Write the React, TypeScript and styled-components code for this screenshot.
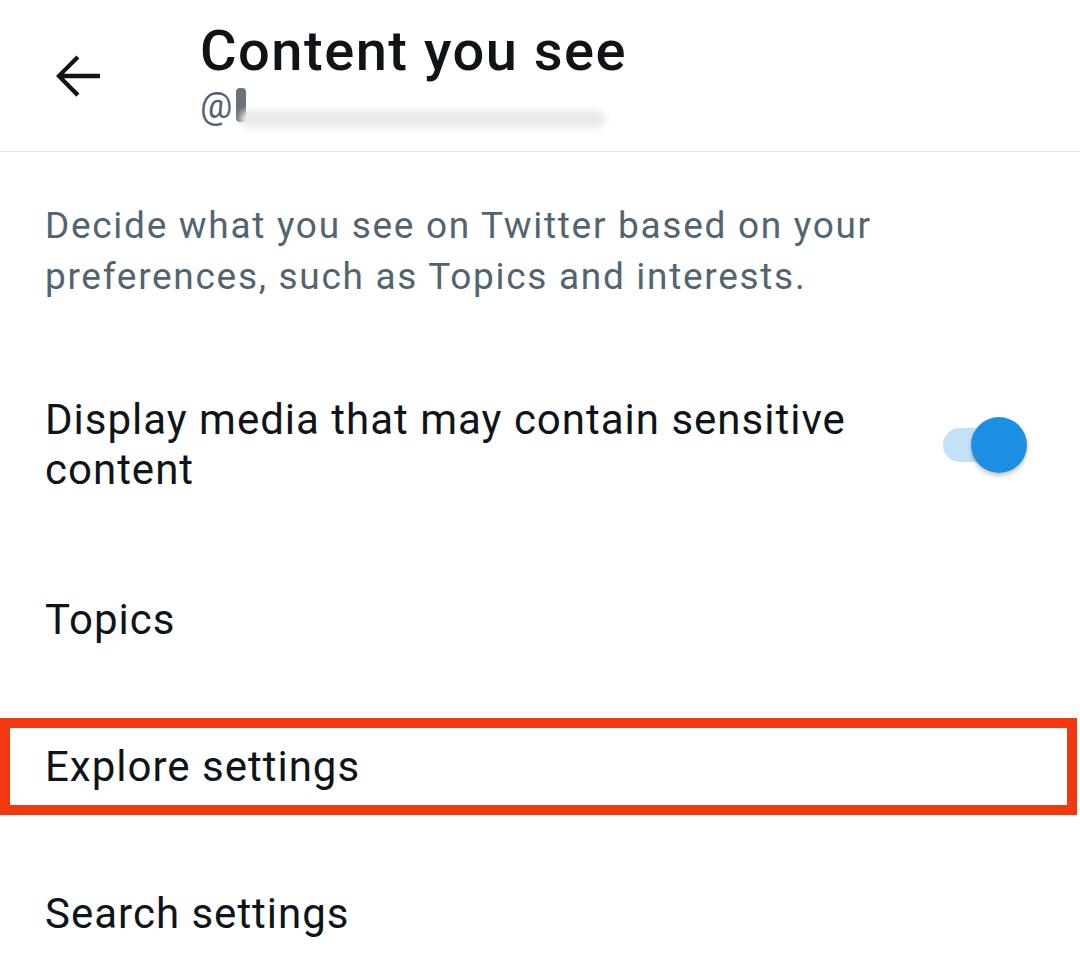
import * as React from 'react';
import styled, { createGlobalStyle } from 'styled-components';

const GlobalStyle = createGlobalStyle`
  html, body {
    margin: 0;
    padding: 0;
    background: #ffffff;
  }
  body {
    font-family: Roboto, "Noto Sans", sans-serif;
    color: #0f1419;
  }
`;

const Page = styled.div`
  width: 1080px;
  min-height: 976px;
  background: #ffffff;
  overflow: hidden;
`;

const Header = styled.header`
  display: flex;
  align-items: flex-start;
  height: 151px;
  border-bottom: 1px solid #e3e7ea;
`;

const BackButton = styled.button`
  display: flex;
  align-items: center;
  justify-content: center;
  width: 66px;
  height: 66px;
  margin: 43px 89px 0 45px;
  padding: 0;
  border: none;
  background: none;
  color: #0f1419;
`;

const TitleBlock = styled.div`
  display: flex;
  flex-direction: column;
  padding-top: 18px;
`;

const Title = styled.h1`
  margin: 0;
  font-size: 56px;
  font-weight: 500;
  letter-spacing: 1.5px;
  line-height: 66px;
  color: #0f1419;
`;

const Handle = styled.div`
  display: flex;
  align-items: center;
  height: 44px;
  font-size: 36px;
  color: #536471;
`;

const Redacted = styled.span`
  position: relative;
  display: inline-block;
  width: 370px;
  height: 40px;
  margin-left: 4px;

  &::before {
    content: '';
    position: absolute;
    left: 0;
    top: 2px;
    width: 10px;
    height: 34px;
    border-radius: 4px;
    background: #6b7379;
  }
  &::after {
    content: '';
    position: absolute;
    left: 4px;
    top: 24px;
    width: 366px;
    height: 18px;
    border-radius: 9px;
    background: #e9ebeb;
    filter: blur(3px);
  }
`;

const Description = styled.p`
  margin: 0;
  padding: 48px 45px 0;
  font-size: 37px;
  letter-spacing: 1.7px;
  line-height: 51px;
  color: #536471;
`;

const List = styled.div`
  display: flex;
  flex-direction: column;
  gap: 50px;
`;

const ToggleRow = styled.div`
  display: flex;
  align-items: center;
  justify-content: space-between;
  gap: 60px;
  padding: 93px 55px 26px 45px;
`;

const ItemText = styled.span`
  font-size: 42px;
  letter-spacing: 1px;
  line-height: 50px;
  color: #0f1419;
`;

const Row = styled.div<{ $highlight?: boolean }>`
  display: flex;
  align-items: center;
  box-sizing: border-box;
  height: 97px;
  margin-right: 3px;
  padding: 0 ${p => (p.$highlight ? 35 : 45)}px;
  border: ${p => (p.$highlight ? '10px solid #f2380f' : 'none')};
`;

const Switch = styled.div<{ $on: boolean }>`
  position: relative;
  flex: none;
  width: 82px;
  height: 56px;

  &::before {
    content: '';
    position: absolute;
    left: 0;
    top: 11px;
    width: 64px;
    height: 34px;
    border-radius: 17px;
    background: ${p => (p.$on ? '#c4e1f8' : '#d5d9dc')};
  }
  &::after {
    content: '';
    position: absolute;
    top: 0;
    left: ${p => (p.$on ? 28 : 0)}px;
    width: 56px;
    height: 56px;
    border-radius: 50%;
    background: ${p => (p.$on ? '#1d8fe3' : '#f4f4f4')};
    box-shadow: 0 3px 4px rgba(0, 0, 0, 0.22);
  }
`;

const BackArrow = () => (
  <svg width="66" height="66" viewBox="0 0 24 24" fill="currentColor">
    <path d="M20 11.2H6.9l5.6-5.6L11.4 4.5 4 12l7.4 7.5 1.1-1.1-5.6-5.6H20v-1.6z" />
  </svg>
);

const items = ['Topics', 'Explore settings', 'Search settings'];

export default function App() {
  const [sensitive, setSensitive] = React.useState(true);

  return (
    <Page>
      <GlobalStyle />
      <Header>
        <BackButton aria-label="Back">
          <BackArrow />
        </BackButton>
        <TitleBlock>
          <Title>Content you see</Title>
          <Handle>
            @<Redacted />
          </Handle>
        </TitleBlock>
      </Header>
      <Description>
        Decide what you see on Twitter based on your preferences, such as Topics and interests.
      </Description>
      <List>
        <ToggleRow onClick={() => setSensitive(!sensitive)}>
          <ItemText>Display media that may contain sensitive content</ItemText>
          <Switch $on={sensitive} />
        </ToggleRow>
        {items.map(item => (
          <Row key={item} $highlight={item === 'Explore settings'}>
            <ItemText>{item}</ItemText>
          </Row>
        ))}
      </List>
    </Page>
  );
}
